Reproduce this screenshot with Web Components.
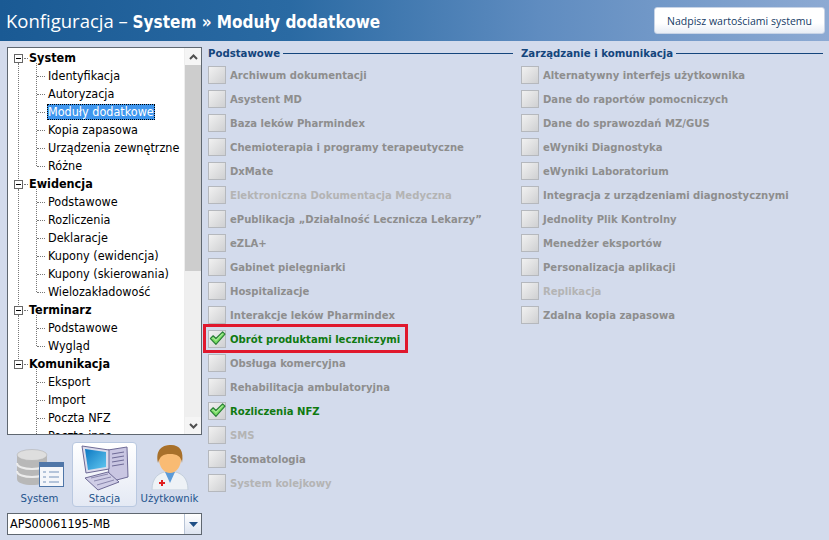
<!DOCTYPE html>
<html>
<head>
<meta charset="utf-8">
<style>
  html, body { margin: 0; height: 100%; overflow: hidden; }
  body { font-family: "DejaVu Sans Condensed", "DejaVu Sans", Tahoma, sans-serif; font-stretch: condensed; background: #d3dbec; }
</style>
</head>
<body>
<config-page></config-page>
<script>
const CHECK_ICON = `<svg width="17" height="15" viewBox="0 0 21 19"><path d="M1.500 9.500 L5 6 L8.500 9.500 L17 1 L20 4 L8.500 17 Z" fill="#78dc62" stroke="#2a7f38" stroke-width="1.400" stroke-linejoin="round"/><path d="M4 9.500 L5 8.500 L8.500 12 L17 3.500" fill="none" stroke="#d2f6c6" stroke-width="1"/></svg>`;

class TitleBar extends HTMLElement {
  constructor() {
    super();
    this.attachShadow({ mode: "open" }).innerHTML = `
<style>
  :host { display: flex; align-items: center; justify-content: space-between; height: 41px; box-sizing: border-box; padding: 0 4px 0 6px;
          background: linear-gradient(90deg, #1a5a94 0, #2a6aa3 35%, #5f8cc0 65%, #8daad3 100%); color: #fff; }
  h1 { margin: 0; font: normal 18.500px "Open Sans", sans-serif; white-space: nowrap; }
  ::slotted(b) { font-family: "DejaVu Sans Condensed", "DejaVu Sans", sans-serif; font-size: 17px; }
  button { width: 171px; height: 27px; border: 1px solid #c8d4e6; border-radius: 3px; padding: 0; color: #143a66;
           background: linear-gradient(#fff, #fff 60%, #e8edf5); font: 10.500px "Open Sans", sans-serif; }
</style>
<h1><slot></slot></h1>
<button>${this.getAttribute("action")}</button>`;
  }
}

class TreeNode extends HTMLElement {
  constructor() {
    super();
    const sel = this.hasAttribute("selected");
    this.attachShadow({ mode: "open" }).innerHTML = `
<style>
  :host { display: flex; align-items: center; height: 18px; font-size: 12.500px; color: #000; white-space: nowrap; padding-left: 28px; position: relative; }
  .elbow { position: absolute; left: 29px; top: 9px; width: 8px; border-top: 1px dotted #777; }
  .label { margin-left: 11px; padding: 0 1px; line-height: 16px; height: 16px; }
  .sel { background: #3f96ee; color: #fff; outline: 1px dotted #000; outline-offset: -1px; }
</style>
<span class="elbow"></span><span class="label ${sel ? "sel" : ""}"><slot></slot></span>`;
  }
}

class TreeGroup extends HTMLElement {
  constructor() {
    super();
    this.attachShadow({ mode: "open" }).innerHTML = `
<style>
  :host { display: block; position: relative; }
  .head { display: flex; align-items: center; height: 18px; padding-left: 6px; font-size: 12.500px; font-weight: bold; color: #000; }
  .title { position: relative; top: -1px; }
  .box { width: 9px; height: 9px; box-sizing: border-box; border: 1px solid #666; background: #fff; position: relative; margin-right: 1px; }
  .box::after { content: ""; position: absolute; left: 1px; right: 1px; top: 3px; height: 1px; background: #000; }
  .dots { width: 4px; border-top: 1px dotted #777; margin-right: 1px; }
  .items { position: relative; }
  .items::before { content: ""; position: absolute; left: 28px; top: -4px; bottom: 9px; border-left: 1px dotted #777; }
  .rail { position: absolute; left: 10px; top: 14px; bottom: -4px; border-left: 1px dotted #777; }
  :host([last]) .rail { display: none; }
</style>
<span class="rail"></span>
<div class="head"><span class="box"></span><span class="dots"></span><span class="title">${this.getAttribute("label")}</span></div>
<div class="items"><slot></slot></div>`;
  }
}

class TreePanel extends HTMLElement {
  constructor() {
    super();
    this.attachShadow({ mode: "open" }).innerHTML = `
<style>
  :host { display: flex; height: 388px; box-sizing: border-box; border: 1px solid #5f6770; background: #fff; overflow: hidden; }
  .list { flex: 1; padding-top: 1px; min-width: 0; overflow: hidden; }
  .bar { width: 16px; display: flex; flex-direction: column; background: #efefef; border-left: 1px solid #eee; }
  .btn { height: 17px; display: flex; align-items: center; justify-content: center; background: #f5f5f5; }
  .thumb { height: 206px; background: #cdcdcd; }
  .track { flex: 1; }
  svg { display: block; }
</style>
<div class="list"><slot></slot></div>
<div class="bar">
  <div class="btn"><svg width="9" height="6"><path d="M1 5 L4.500 1.500 L8 5" fill="none" stroke="#505050" stroke-width="2"/></svg></div>
  <div class="thumb"></div><div class="track"></div>
  <div class="btn"><svg width="9" height="6"><path d="M1 1 L4.500 4.500 L8 1" fill="none" stroke="#505050" stroke-width="2"/></svg></div>
</div>`;
  }
}

class ScopeTab extends HTMLElement {
  constructor() {
    super();
    this.attachShadow({ mode: "open" }).innerHTML = `
<style>
  :host { display: flex; flex-direction: column; align-items: center; box-sizing: border-box; height: 65px; width: 65px; padding-top: 1px;
          font-size: 11.300px; color: #24548c; border: 1px solid transparent; border-radius: 4px; white-space: nowrap; }
  :host([active]) { background: linear-gradient(#fff, #e4e9f4); border-color: #b9c8e0; }
  .icon { height: 47px; display: flex; align-items: center; }
  span { line-height: 15px; }
</style>
<div class="icon"><slot name="icon"></slot></div><span>${this.getAttribute("label")}</span>`;
  }
}

class HostSelect extends HTMLElement {
  constructor() {
    super();
    this.attachShadow({ mode: "open" }).innerHTML = `
<style>
  :host { display: flex; height: 22px; box-sizing: border-box; border: 1px solid #5f6770; background: #fff; font-size: 12.500px; color: #000; align-items: stretch; }
  .val { flex: 1; padding-left: 2px; line-height: 20px; }
  .arrow { width: 16px; background: linear-gradient(#fff, #dde4f0); border-left: 1px solid #b8c4d6; display: flex; align-items: center; justify-content: center; }
</style>
<div class="val"><slot></slot></div>
<div class="arrow"><svg width="9" height="5"><path d="M0 0 H9 L4.500 5 Z" fill="#1f4f85"/></svg></div>`;
  }
}

class ModuleCheck extends HTMLElement {
  constructor() {
    super();
    const on = this.hasAttribute("checked");
    this.attachShadow({ mode: "open" }).innerHTML = `
<style>
  :host { display: flex; align-items: center; height: 24px; gap: 4px; font-size: 11.200px; font-weight: bold; color: #8e8e8e; white-space: nowrap; }
  :host([checked]) { color: #0f7a10; }
  :host([faint]) { color: #b4b4b4; }
  .box { width: 16px; height: 16px; box-sizing: content-box; border: 1px solid #b5b8bd; flex: none; position: relative;
         background: linear-gradient(135deg, #f1f1f1, #cfd0d2); }
  svg { position: absolute; left: 0; top: 0; }
</style>
<span class="box">${on ? CHECK_ICON : ""}</span><span><slot></slot></span>`;
  }
}

class ModuleGroup extends HTMLElement {
  constructor() {
    super();
    this.attachShadow({ mode: "open" }).innerHTML = `
<style>
  :host { display: block; width: var(--w, 305px); }
  .head { display: flex; align-items: center; gap: 3px; height: 14px; margin-bottom: 3px; font-size: 11.300px; font-weight: bold; color: #14457c; white-space: nowrap; }
  .line { flex: 1; border-top: 1px solid #14457c; }
</style>
<div class="head"><span>${this.getAttribute("label")}</span><span class="line"></span></div>
<slot></slot>`;
  }
}

class MarkedRow extends HTMLElement {
  constructor() {
    super();
    this.attachShadow({ mode: "open" }).innerHTML = `
<style>
  :host { display: block; position: relative; }
  .mark { position: absolute; left: -5px; top: -3px; width: 205px; height: 29px; box-sizing: border-box; border: 3px solid #e0182d; }
</style>
<slot></slot><span class="mark"></span>`;
  }
}

class ConfigPage extends HTMLElement {
  constructor() {
    super();
    const tree = [
      ["System", ["Identyfikacja", "Autoryzacja", "*Moduły dodatkowe", "Kopia zapasowa", "Urządzenia zewnętrzne", "Różne"]],
      ["Ewidencja", ["Podstawowe", "Rozliczenia", "Deklaracje", "Kupony (ewidencja)", "Kupony (skierowania)", "Wielozakładowość"]],
      ["Terminarz", ["Podstawowe", "Wygląd"]],
      ["Komunikacja", ["Eksport", "Import", "Poczta NFZ", "Poczta inna"]],
    ].map(([label, items], i, all) =>
      `<tree-group label="${label}" ${i === all.length - 1 ? "last" : ""}>${items.map(t =>
        t[0] === "*" ? `<tree-node selected>${t.slice(1)}</tree-node>` : `<tree-node>${t}</tree-node>`).join("")}</tree-group>`).join("");

    // [label, state] state: c = checked, f = faint
    const basic = [
      ["Archiwum dokumentacji"], ["Asystent MD"], ["Baza leków Pharmindex"], ["Chemioterapia i programy terapeutyczne"],
      ["DxMate"], ["Elektroniczna Dokumentacja Medyczna", "f"], ["ePublikacja „Działalność Lecznicza Lekarzy”"], ["eZLA+"],
      ["Gabinet pielęgniarki"], ["Hospitalizacje"], ["Interakcje leków Pharmindex"], ["Obrót produktami leczniczymi", "m"],
      ["Obsługa komercyjna"], ["Rehabilitacja ambulatoryjna"], ["Rozliczenia NFZ", "c"], ["SMS", "f"], ["Stomatologia"], ["System kolejkowy", "f"],
    ];
    const mgmt = [
      ["Alternatywny interfejs użytkownika"], ["Dane do raportów pomocniczych"], ["Dane do sprawozdań MZ/GUS"], ["eWyniki Diagnostyka"],
      ["eWyniki Laboratorium"], ["Integracja z urządzeniami diagnostycznymi"], ["Jednolity Plik Kontrolny"], ["Menedżer eksportów"],
      ["Personalizacja aplikacji"], ["Replikacja", "f"], ["Zdalna kopia zapasowa"],
    ];
    const row = ([t, s]) => {
      if (s === "m") return `<marked-row><module-check checked>${t}</module-check></marked-row>`;
      return `<module-check ${s === "c" ? "checked" : s === "f" ? "faint" : ""}>${t}</module-check>`;
    };

    this.attachShadow({ mode: "open" }).innerHTML = `
<style>
  :host { display: block; width: 829px; height: 540px; overflow: hidden; }
  .body { display: flex; height: 499px; }
  .side { width: 195px; margin-left: 7px; padding-top: 6px; display: flex; flex-direction: column; }
  .tabs { display: flex; margin-top: 7px; }
  tree-panel { flex: none; }
  host-select { margin-top: 6px; }
  .main { display: flex; padding: 5px 0 0 6px; }
  module-group:first-child { --w: 305px; margin-right: 8px; }
  module-group:last-child { --w: 302px; }
</style>
<title-bar action="Nadpisz wartościami systemu">Konfiguracja – <b>System » Moduły dodatkowe</b></title-bar>
<div class="body">
  <div class="side">
    <tree-panel>${tree}</tree-panel>
    <div class="tabs">
      <scope-tab label="System"><svg slot="icon" width="48" height="38" viewBox="0 0 48 38">
        <path d="M1 6 V30 C1 38 31 38 31 30 V6 Z" fill="#b8b8b8"/>
        <path d="M1 14 C1 22 31 22 31 14 M1 22 C1 30 31 30 31 22" fill="none" stroke="#ececec" stroke-width="2"/>
        <ellipse cx="16" cy="6" rx="15" ry="5.500" fill="#dedede" stroke="#a8a8a8" stroke-width=".5"/>
        <rect x="23.500" y="13.500" width="24" height="24" fill="#f4f6fa" stroke="#4f76a8"/><rect x="23" y="13" width="25" height="5" fill="#4f76a8"/>
        <path d="M27 23 h3 M33 23 h10 M27 28 h3 M33 28 h10 M27 33 h3 M33 33 h10" stroke="#9fb4cf" stroke-width="1.500"/></svg></scope-tab>
      <scope-tab active label="Stacja"><svg slot="icon" width="48" height="46" viewBox="0 0 48 46">
        <path d="M27 5 L46 2 L47 32 L28 37 Z" fill="#c9c6e2" stroke="#6e6a96"/><path d="M31 9 L43 7 M31 13 L43 11 M31 17 L43 15 M31 21 L43 19" stroke="#6e6a96"/>
        <path d="M1 1 L28 5 V24 L5 28 Z" fill="#dcdcec" stroke="#6e6a96"/>
        <defs><linearGradient id="scr" x1="0" y1="0" x2="1" y2="1"><stop offset="0" stop-color="#0d78c2"/><stop offset="1" stop-color="#62c8f0"/></linearGradient></defs>
        <path d="M4 4 L25 7 V22 L7 25 Z" fill="url(#scr)"/>
        <path d="M4 33 L27 27 L38 37 L17 45 Z" fill="#cfcde6" stroke="#6e6a96"/><path d="M10 33 L27 29 M13 36 L30 32 M16 40 L33 35" stroke="#8a87ad"/></svg></scope-tab>
      <scope-tab label="Użytkownik"><svg slot="icon" width="40" height="45" viewBox="0 0 40 45">
        <path d="M2 45 C2 33 8 27 20 26 C32 27 38 33 38 45 Z" fill="#eef2f6" stroke="#c3cfdc"/>
        <path d="M15 27 L20 38 L25 27 Z" fill="#5c9bd8"/>
        <ellipse cx="20" cy="14" rx="11" ry="14" fill="#f9bb73"/>
        <path d="M8 18 C5 4 13 0 21 0 C30 0 34 6 32 18 C31 11 27 9 20 9 C13 9 10 11 8 18 Z" fill="#a8702a"/>
        <path d="M9 37 h2 v-2 h2 v2 h2 v2 h-2 v2 h-2 v-2 h-2 Z" fill="#e02020"/></svg></scope-tab>
    </div>
    <host-select>APS00061195-MB</host-select>
  </div>
  <div class="main">
    <module-group label="Podstawowe">${basic.map(row).join("")}</module-group>
    <module-group label="Zarządzanie i komunikacja">${mgmt.map(row).join("")}</module-group>
  </div>
</div>`;
  }
}

customElements.define("title-bar", TitleBar);
customElements.define("tree-node", TreeNode);
customElements.define("tree-group", TreeGroup);
customElements.define("tree-panel", TreePanel);
customElements.define("scope-tab", ScopeTab);
customElements.define("host-select", HostSelect);
customElements.define("module-check", ModuleCheck);
customElements.define("module-group", ModuleGroup);
customElements.define("marked-row", MarkedRow);
customElements.define("config-page", ConfigPage);
</script>
</body>
</html>
